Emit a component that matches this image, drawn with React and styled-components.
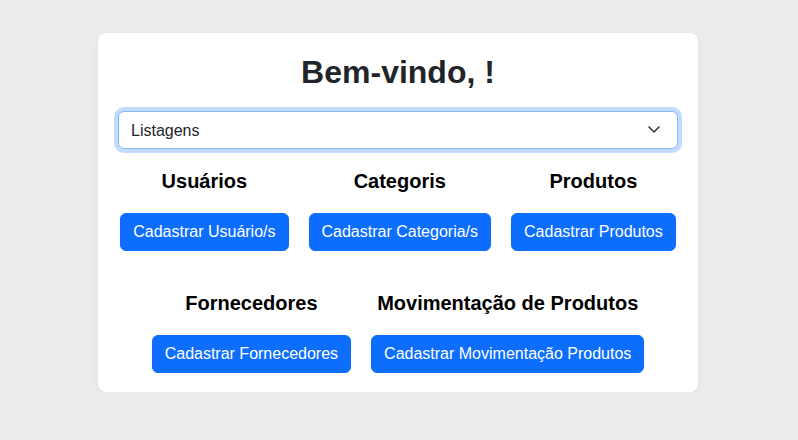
import React from "react";
import styled, { createGlobalStyle } from "styled-components";

const GlobalStyle = createGlobalStyle`
  body {
    margin: 0;
    background-color: #ececec;
    font-family: "Liberation Sans", Arial, sans-serif;
    color: #212529;
  }
`;

const Card = styled.main`
  width: 600px;
  box-sizing: border-box;
  margin: 33px 0 0 calc(50% - 301px);
  padding: 20px 20px 19px;
  background-color: #fff;
  border-radius: 8px;
  box-shadow: 0 2px 6px rgba(0, 0, 0, 0.06);
  h1 {
    margin: 0 0 20px;
    font-size: 32px;
    line-height: 1.2;
    font-weight: 700;
    text-align: center;
  }
`;

const SelectWrap = styled.div`
  position: relative;
  margin-bottom: 20px;
  svg {
    position: absolute;
    right: 16px;
    top: 13px;
    pointer-events: none;
  }
`;

const Select = styled.select`
  display: block;
  width: 100%;
  height: 38px;
  box-sizing: border-box;
  padding: 6px 36px 6px 12px;
  font-family: inherit;
  font-size: 16px;
  color: #212529;
  background-color: #fff;
  border: 1px solid #86b7fe;
  border-radius: 6px;
  box-shadow: 0 0 0 4px rgba(13, 110, 253, 0.25);
  appearance: none;
  outline: none;
`;

const Row = styled.div`
  display: flex;
  justify-content: center;
  gap: 20px;
  & + & {
    margin-top: 40px;
  }
`;

const Section = styled.section`
  display: flex;
  flex-direction: column;
  align-items: center;
  h3 {
    margin: 0 0 20px;
    font-size: 20px;
    line-height: 24px;
    font-weight: 700;
    color: #000;
    white-space: nowrap;
  }
`;

const Button = styled.button`
  padding: 6px 12px;
  font-family: inherit;
  font-size: 16px;
  line-height: 24px;
  color: #fff;
  background-color: #0d6efd;
  border: 1px solid #0d6efd;
  border-radius: 6px;
  white-space: nowrap;
  cursor: pointer;
`;

const rows = [
  [
    { title: "Usuários", action: "Cadastrar Usuário/s" },
    { title: "Categoris", action: "Cadastrar Categoria/s" },
    { title: "Produtos", action: "Cadastrar Produtos" },
  ],
  [
    { title: "Fornecedores", action: "Cadastrar Fornecedores" },
    { title: "Movimentação de Produtos", action: "Cadastrar Movimentação Produtos" },
  ],
];

const App = () => {
  return (
    <>
      <GlobalStyle />
      <Card>
        <h1>Bem-vindo, !</h1>
        <SelectWrap>
          <Select defaultValue="listagens">
            <option value="listagens">Listagens</option>
          </Select>
          <svg width="16" height="12" viewBox="0 0 16 12" fill="none">
            <path d="M3 3l5 5 5-5" stroke="#343a40" strokeWidth="1.6" strokeLinecap="round" strokeLinejoin="round" />
          </svg>
        </SelectWrap>
        {rows.map((row, i) => (
          <Row key={i}>
            {row.map((item) => (
              <Section key={item.title}>
                <h3>{item.title}</h3>
                <Button>{item.action}</Button>
              </Section>
            ))}
          </Row>
        ))}
      </Card>
    </>
  );
};

export default App;
